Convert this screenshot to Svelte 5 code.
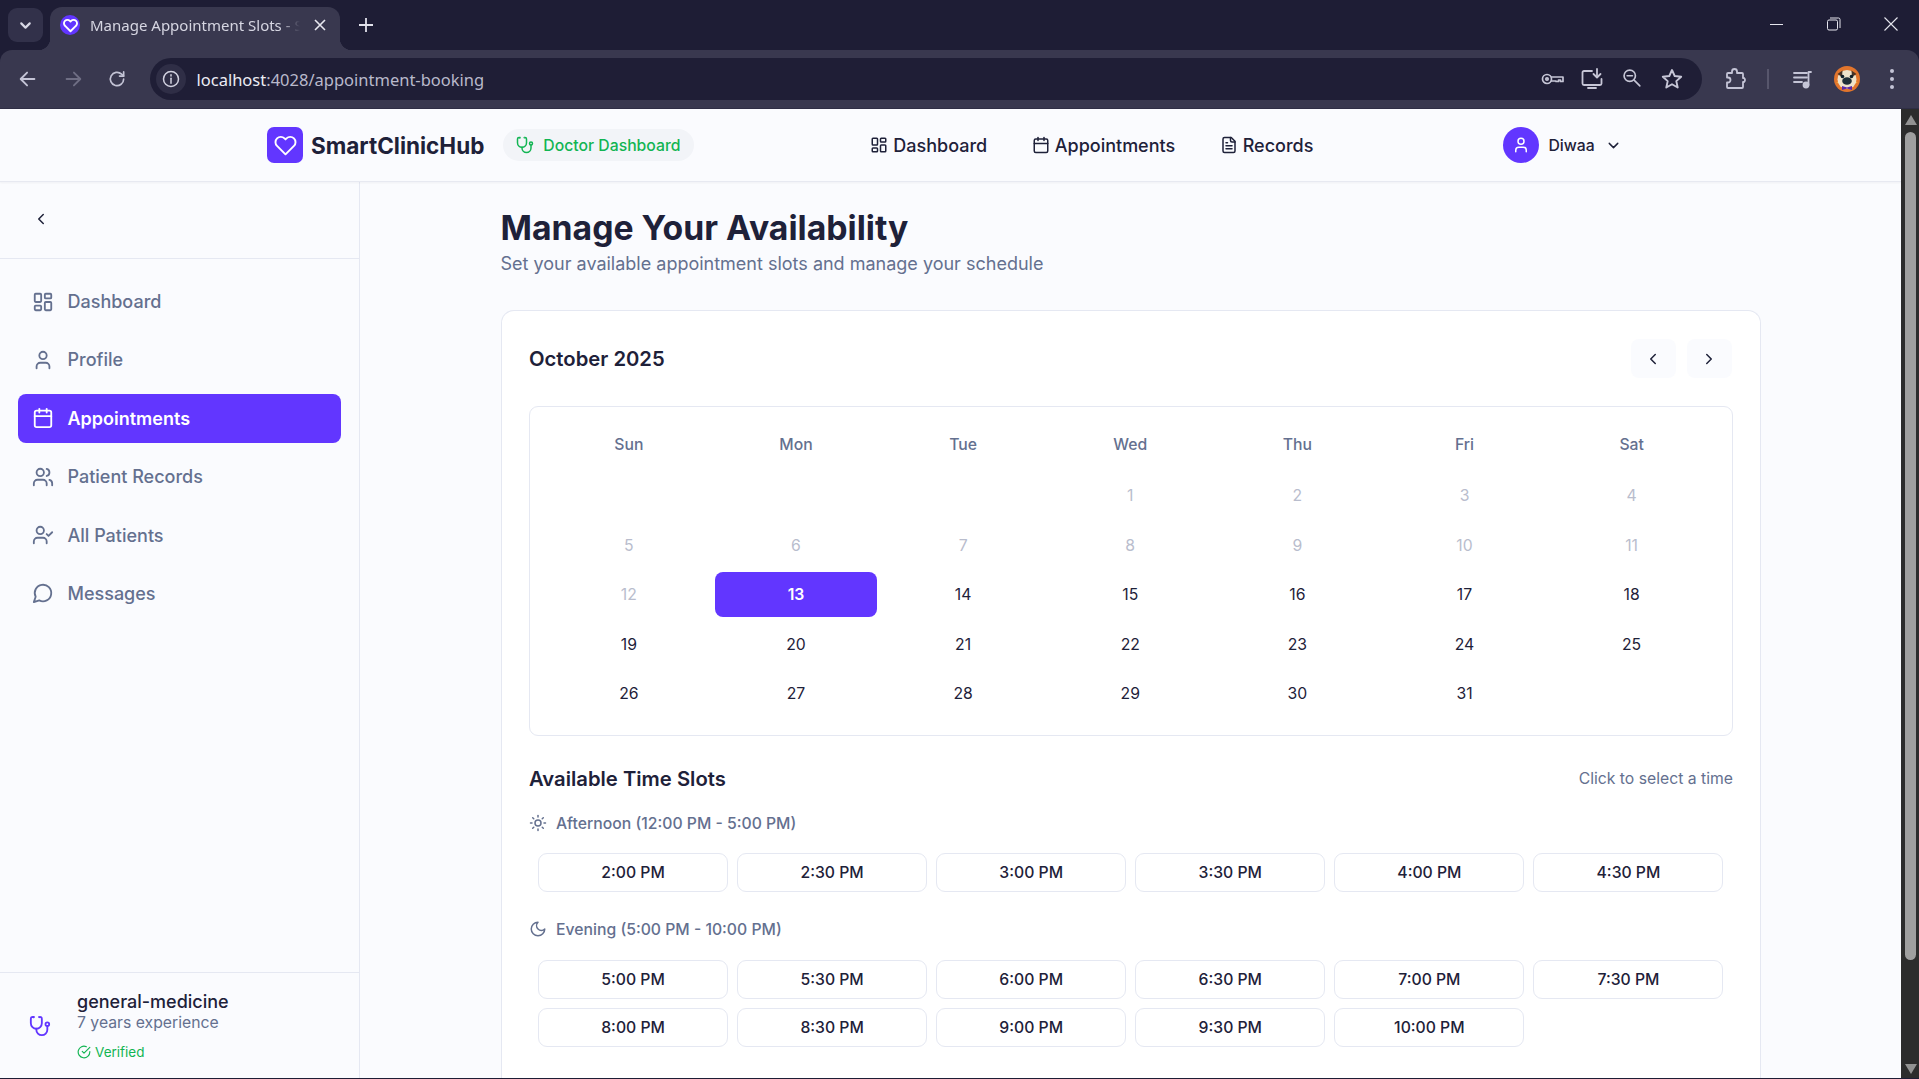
<script>
  const icons = {
    dash: '<rect x="3" y="3" width="7" height="9" rx="1"/><rect x="14" y="3" width="7" height="5" rx="1"/><rect x="14" y="12" width="7" height="9" rx="1"/><rect x="3" y="16" width="7" height="5" rx="1"/>',
    user: '<path d="M19 21v-2a4 4 0 0 0-4-4H9a4 4 0 0 0-4 4v2"/><circle cx="12" cy="7" r="4"/>',
    cal: '<path d="M8 2v4"/><path d="M16 2v4"/><rect x="3" y="4" width="18" height="18" rx="2"/><path d="M3 10h18"/>',
    users: '<path d="M16 21v-2a4 4 0 0 0-4-4H6a4 4 0 0 0-4 4v2"/><circle cx="9" cy="7" r="4"/><path d="M22 21v-2a4 4 0 0 0-3-3.87"/><path d="M16 3.13a4 4 0 0 1 0 7.75"/>',
    ucheck: '<path d="M16 21v-2a4 4 0 0 0-4-4H6a4 4 0 0 0-4 4v2"/><circle cx="9" cy="7" r="4"/><polyline points="16 11 18 13 22 9"/>',
    msg: '<path d="M7.9 20A9 9 0 1 0 4 16.1L2 22Z"/>',
    file: '<path d="M15 2H6a2 2 0 0 0-2 2v16a2 2 0 0 0 2 2h12a2 2 0 0 0 2-2V7Z"/><path d="M14 2v4a2 2 0 0 0 2 2h4"/><path d="M10 9H8"/><path d="M16 13H8"/><path d="M16 17H8"/>',
    steth: '<path d="M4.8 2.3A.3.3 0 1 0 5 2H4a2 2 0 0 0-2 2v5a6 6 0 0 0 6 6a6 6 0 0 0 6-6V4a2 2 0 0 0-2-2h-1a.2.2 0 1 0 .3.3"/><path d="M8 15v1a6 6 0 0 0 6 6a6 6 0 0 0 6-6v-4"/><circle cx="20" cy="10" r="2"/>',
    heart: '<path d="M20.84 4.61a5.5 5.5 0 0 0-7.78 0L12 5.67l-1.06-1.06a5.5 5.5 0 0 0-7.78 7.78l1.06 1.06L12 21.23l7.78-7.78 1.06-1.06a5.5 5.5 0 0 0 0-7.78z"/>',
    sun: '<circle cx="12" cy="12" r="4"/><path d="M12 2v2"/><path d="M12 20v2"/><path d="m4.93 4.93 1.41 1.41"/><path d="m17.66 17.66 1.41 1.41"/><path d="M2 12h2"/><path d="M20 12h2"/><path d="m6.34 17.66-1.41 1.41"/><path d="m19.07 4.93-1.41 1.41"/>',
    moon: '<path d="M12 3a6 6 0 0 0 9 9 9 9 0 1 1-9-9Z"/>',
    check: '<path d="M22 11.08V12a10 10 0 1 1-5.93-9.14"/><path d="m9 11 3 3L22 4"/>',
    left: '<path d="m15 18-6-6 6-6"/>',
    right: '<path d="m9 18 6-6-6-6"/>',
    down: '<path d="m6 9 6 6 6-6"/>',
    back: '<path d="M19 12H5"/><path d="m11 5-7 7 7 7"/>',
    fwd: '<path d="M5 12h14"/><path d="m13 5 7 7-7 7"/>',
    reload: '<path d="M20 12a8 8 0 1 1-2.5-5.8L20 8.5"/><path d="M20 3.5v5h-5"/>',
    info: '<circle cx="12" cy="12" r="9"/><path d="M12 11v6"/><path d="M12 7v1.5"/>',
    key: '<circle cx="7" cy="12" r="4.5"/><circle cx="7" cy="12" r="1.2"/><path d="M11.5 10H23v4.5h-2.5V13h-2v1.5h-2.5V14h-4.5"/>',
    install: '<path d="M12 4H4a1.5 1.5 0 0 0-1.5 1.5v11A1.5 1.5 0 0 0 4 18h16a1.5 1.5 0 0 0 1.5-1.5V12"/><path d="M8 21h8"/><path d="M17 2v8"/><path d="m13.5 7 3.5 3.5L20.500 7"/>',
    search: '<circle cx="10" cy="10" r="6.500"/><path d="M7 10h6"/><path d="m15 15 6.500 6.500"/>',
    star: '<path d="m12 3 2.700 6 6.500.7-4.900 4.400 1.400 6.400L12 17.200 6.300 20.500l1.400-6.400L2.800 9.700l6.500-.7z"/>',
    ext: '<path d="M9 4.500a2.500 2.500 0 0 1 5 0V6h5a1 1 0 0 1 1 1v4h1a2.500 2.500 0 0 1 0 4h-1v5a1 1 0 0 1-1 1H5a1 1 0 0 1-1-1v-4.500h1a2.500 2.500 0 0 0 0-5H4V7a1 1 0 0 1 1-1h4z"/>',
    media: '<path d="M3 6h13"/><path d="M3 10.500h13"/><path d="M3 15h8"/><path d="M20 5h-2.500v13"/><circle cx="15" cy="18" r="2.500" fill="currentColor"/>'
  };

  const sideItems = [
    { icon: 'dash', label: 'Dashboard' },
    { icon: 'user', label: 'Profile' },
    { icon: 'cal', label: 'Appointments', active: true },
    { icon: 'users', label: 'Patient Records' },
    { icon: 'ucheck', label: 'All Patients' },
    { icon: 'msg', label: 'Messages' }
  ];
  const topLinks = [
    { icon: 'dash', label: 'Dashboard' },
    { icon: 'cal', label: 'Appointments' },
    { icon: 'file', label: 'Records' }
  ];
  const weekdays = ['Sun', 'Mon', 'Tue', 'Wed', 'Thu', 'Fri', 'Sat'];
  const days = [null, null, null, ...Array.from({ length: 31 }, (_, i) => i + 1)];
  const afternoon = ['2:00 PM', '2:30 PM', '3:00 PM', '3:30 PM', '4:00 PM', '4:30 PM'];
  const evening = ['5:00 PM', '5:30 PM', '6:00 PM', '6:30 PM', '7:00 PM', '7:30 PM', '8:00 PM', '8:30 PM', '9:00 PM', '9:30 PM', '10:00 PM'];
</script>

{#snippet icon(name, size, sw = 2)}
  <svg class="ic" width={size} height={size} viewBox="0 0 24 24" fill="none" stroke="currentColor" stroke-width={sw} stroke-linecap="round" stroke-linejoin="round">{@html icons[name]}</svg>
{/snippet}

<div class="screen">
  <div class="tabstrip">
    <div class="tablist">{@render icon('down', 17, 3)}</div>
    <div class="tab">
      <span class="favicon">{@render icon('heart', 15, 3)}</span>
      <span class="tabtitle">Manage Appointment Slots - SmartClinicHub</span>
      <span class="tabclose">
        <svg width="12" height="12" viewBox="0 0 12 12" fill="none" stroke="currentColor" stroke-width="1.600"><path d="M1 1l10 10M11 1L1 11"/></svg>
      </span>
    </div>
    <div class="newtab">
      <svg width="14" height="14" viewBox="0 0 14 14" fill="none" stroke="currentColor" stroke-width="1.800"><path d="M7 0v14M0 7h14"/></svg>
    </div>
    <div class="winctl">
      <span class="wc"><svg width="14" height="14" viewBox="0 0 14 14" fill="none" stroke="currentColor"><path d="M0 7.500h13"/></svg></span>
      <span class="wc"><svg width="14" height="14" viewBox="0 0 14 14" fill="none" stroke="currentColor"><rect x="0.500" y="3" width="10" height="10" rx="1.500"/><path d="M3 1h8.500a1.500 1.500 0 0 1 1.500 1.500V11"/></svg></span>
      <span class="wc"><svg width="14" height="14" viewBox="0 0 14 14" fill="none" stroke="currentColor" stroke-width="1.100"><path d="M.5.500l13 13M13.500.500l-13 13"/></svg></span>
    </div>
  </div>

  <div class="toolbar">
    <span class="tb">{@render icon('back', 22)}</span>
    <span class="tb dim">{@render icon('fwd', 22)}</span>
    <span class="tb">{@render icon('reload', 20)}</span>
    <div class="urlbar">
      <span class="infobtn">{@render icon('info', 20, 1.800)}</span>
      <span class="url"><span class="host">localhost</span>:4028/appointment-booking</span>
      <span class="urlicons">
        <span class="ui">{@render icon('key', 24, 1.700)}</span>
        <span class="ui">{@render icon('install', 24, 1.800)}</span>
        <span class="ui">{@render icon('search', 21, 1.900)}</span>
        <span class="ui">{@render icon('star', 24, 1.900)}</span>
      </span>
    </div>
    <span class="tb ext">{@render icon('ext', 24, 1.800)}</span>
    <span class="divider"></span>
    <span class="tb">{@render icon('media', 24, 1.800)}</span>
    <span class="tb">
      <svg width="26" height="26" viewBox="0 0 26 26">
        <circle cx="13" cy="13" r="13" fill="#e2752c"/>
        <path d="M2 17c3-1 4-6 3-9l2 9zM24 17c-3-1-4-6-3-9l-2 9z" fill="#f2b23a"/>
        <ellipse cx="13" cy="13.500" rx="9.500" ry="9.500" fill="#efe3cb"/>
        <path d="M3.500 8 8.500 4.500 8 11zM22.500 8 17.500 4.500 18 11z" fill="#4a3426"/>
        <ellipse cx="13" cy="15" rx="4.800" ry="3.800" fill="#1f2f38"/>
        <circle cx="8.500" cy="10.500" r="1.800" fill="#10202a"/>
        <circle cx="17.500" cy="10.500" r="1.800" fill="#10202a"/>
        <path d="M8 20l5 1.500L18 20v4l-5-1.500L8 24z" fill="#5b2aa8"/>
      </svg>
    </span>
    <span class="tb dots"><i></i><i></i><i></i></span>
  </div>

  <div class="viewport">
    <div class="page">
      <header class="topbar">
        <div class="logo">{@render icon('heart', 23)}</div>
        <span class="brand">SmartClinicHub</span>
        <span class="badge">{@render icon('steth', 18)}Doctor Dashboard</span>
        <nav class="toplinks">
          {#each topLinks as l}
            <span class="toplink">{@render icon(l.icon, 18)}{l.label}</span>
          {/each}
        </nav>
        <div class="account">
          <span class="avatar">{@render icon('user', 18)}</span>
          <span class="acname">Diwaa</span>
          {@render icon('down', 17)}
        </div>
      </header>

      <div class="body">
        <aside class="sidebar">
          <div class="collapse">{@render icon('left', 18)}</div>
          <nav class="sidenav">
            {#each sideItems as it}
              <div class="sideitem" class:active={it.active}>{@render icon(it.icon, 22)}<span>{it.label}</span></div>
            {/each}
          </nav>
          <div class="sidefoot">
            <span class="stetho">{@render icon('steth', 22)}</span>
            <div class="footinfo">
              <div class="spec">general-medicine</div>
              <div class="years">7 years experience</div>
              <div class="verified">{@render icon('check', 14)}Verified</div>
            </div>
          </div>
        </aside>

        <main class="main">
          <h1>Manage Your Availability</h1>
          <p class="sub">Set your available appointment slots and manage your schedule</p>

          <section class="card">
            <div class="calhead">
              <h2>October 2025</h2>
              <div class="calnav">
                <button class="navbtn">{@render icon('left', 18)}</button>
                <button class="navbtn">{@render icon('right', 18)}</button>
              </div>
            </div>

            <div class="calbox">
              <div class="weekdays">
                {#each weekdays as w}<span>{w}</span>{/each}
              </div>
              <div class="days">
                {#each days as d}
                  <span class="day" class:past={d && d < 13} class:sel={d === 13}>{d ?? ''}</span>
                {/each}
              </div>
            </div>

            <div class="slothead">
              <h3>Available Time Slots</h3>
              <span class="hint">Click to select a time</span>
            </div>

            <div class="period first">{@render icon('sun', 18)}<span>Afternoon (12:00 PM - 5:00 PM)</span></div>
            <div class="slots">
              {#each afternoon as s}<button class="slot">{s}</button>{/each}
            </div>

            <div class="period">{@render icon('moon', 18)}<span>Evening (5:00 PM - 10:00 PM)</span></div>
            <div class="slots">
              {#each evening as s}<button class="slot">{s}</button>{/each}
            </div>
          </section>
        </main>
      </div>
    </div>

    <div class="scrollbar">
      <span class="arrow up"></span>
      <span class="thumb"></span>
      <span class="arrow dn"></span>
    </div>
  </div>
  <div class="bottomline"></div>
</div>

<style>
  :global(body) { margin: 0; overflow: hidden; background: #1e1d35; }
  .screen {
    width: 1919px; height: 1079px; display: flex; flex-direction: column; overflow: hidden;
    font-family: Inter, "Noto Sans", sans-serif; color: #1e2139;
  }
  .ic { display: block; flex: none; }

  /* browser chrome */
  .tabstrip { height: 50px; flex: none; background: #1e1d35; display: flex; align-items: flex-end; position: relative; }
  .tablist {
    width: 35px; height: 34px; margin: 0 7px 8px 8px; border-radius: 9px; background: #32314a;
    display: flex; align-items: center; justify-content: center; color: #d9d9e6;
  }
  .tab {
    width: 290px; height: 43px; background: #39384f; border-radius: 12px 12px 0 0; position: relative;
    display: flex; align-items: center; padding: 0 0 7px 10px; box-sizing: border-box; color: #d6d6e2;
    font: 15px "Noto Sans", sans-serif;
  }
  .tab::before, .tab::after { content: ""; position: absolute; bottom: 0; width: 12px; height: 12px; }
  .tab::before { left: -12px; background: radial-gradient(circle at 0 0, transparent 12px, #39384f 12.5px); }
  .tab::after { right: -12px; background: radial-gradient(circle at 100% 0, transparent 12px, #39384f 12.5px); }
  .favicon { width: 20px; height: 20px; border-radius: 50%; background: #6236ff; color: #fff; display: flex; align-items: center; justify-content: center; }
  .tabtitle {
    margin-left: 10px; width: 210px; white-space: nowrap; overflow: hidden;
    -webkit-mask-image: linear-gradient(90deg, #000 190px, transparent 210px);
    mask-image: linear-gradient(90deg, #000 190px, transparent 210px);
  }
  .tabclose { margin-left: 14px; color: #e8e8f0; display: flex; }
  .newtab { margin: 0 0 18px 19px; color: #e2e2ec; display: flex; }
  .winctl { margin-left: auto; margin-right: 21px; display: flex; align-self: flex-start; margin-top: 17px; gap: 43px; color: #e6e6ee; }
  .wc { display: flex; width: 14px; }

  .toolbar {
    height: 59px; flex: none; box-sizing: border-box; background: #39384f; border-radius: 12px 12px 0 0;
    border-bottom: 1px solid #2f2e45; display: flex; align-items: center; padding-left: 6px; color: #c4c4d6;
  }
  .tb { width: 44.500px; height: 40px; display: flex; align-items: center; justify-content: center; flex: none; }
  .tb.dim { color: #6f6e84; }
  .urlbar {
    width: 1552px; height: 42px; margin-left: 10px; flex: none; border-radius: 21px; background: #1f1e36;
    display: flex; align-items: center; padding: 0 10px 0 6px; box-sizing: border-box;
  }
  .infobtn { width: 30px; height: 30px; border-radius: 50%; background: #2f2e46; display: flex; align-items: center; justify-content: center; color: #d2d2e0; }
  .url { margin-left: 11px; font: 16.500px "Noto Sans", sans-serif; color: #b9b9cb; }
  .host { color: #ecECF4; }
  .urlicons { margin-left: auto; display: flex; }
  .ui { width: 40px; display: flex; justify-content: center; color: #c6c6d6; }
  .ext { margin-left: 12px; width: 42px; }
  .divider { width: 2px; height: 20px; background: #57566c; margin: 0 12px 0 11px; flex: none; }
  .dots { flex-direction: column; gap: 4px; margin-left: 0; }
  .dots i { width: 4px; height: 4px; border-radius: 50%; background: #c4c4d6; display: block; }

  /* viewport */
  .viewport { flex: 1; min-height: 0; display: flex; }
  .page { flex: 1; min-width: 0; background: #fafbfe; display: flex; flex-direction: column; }

  .topbar {
    height: 73px; flex: none; box-sizing: border-box; border-bottom: 1px solid #e7e9f1; box-shadow: 0 1px 2px rgba(30, 33, 57, .05);
    display: flex; align-items: center; padding-left: 267px; position: relative; z-index: 1;
  }
  .logo { width: 36px; height: 36px; border-radius: 7px; background: #6236ff; color: #fff; display: flex; align-items: center; justify-content: center; }
  .brand { margin-left: 8px; font-size: 22.500px; font-weight: 700; }
  .badge {
    margin-left: 19px; height: 32px; width: 191px; box-sizing: border-box; border-radius: 16px; background: #f2f4f8;
    display: flex; align-items: center; gap: 9px; padding-left: 13px; color: #12b553; font-size: 15.750px; font-weight: 500;
  }
  .toplinks { display: flex; margin-left: 176px; gap: 44.500px; }
  .toplink { display: flex; align-items: center; gap: 5px; font-size: 18px; font-weight: 500; }
  .account { margin-left: 190px; display: flex; align-items: center; }
  .avatar { width: 36px; height: 36px; border-radius: 50%; background: #6236ff; color: #fff; display: flex; align-items: center; justify-content: center; }
  .acname { margin: 0 10px 0 9px; font-size: 15.750px; font-weight: 500; }

  .body { flex: 1; min-height: 0; display: flex; }
  .sidebar { width: 360px; flex: none; box-sizing: border-box; border-right: 1px solid #e5e8f2; display: flex; flex-direction: column; }
  .collapse { height: 77px; box-sizing: border-box; border-bottom: 1px solid #e5e8f2; display: flex; align-items: center; padding: 0 0 2px 32px; }
  .sidenav { padding: 18px 18px 0; display: flex; flex-direction: column; gap: 9.400px; }
  .sideitem {
    height: 49px; border-radius: 8px; display: flex; align-items: center; gap: 14px; padding-left: 13.500px;
    color: #64708f; font-size: 18px; font-weight: 500;
  }
  .sideitem.active { background: #6236ff; color: #fff; font-weight: 600; }
  .sidefoot { margin-top: auto; border-top: 1px solid #e5e8f2; height: 106px; box-sizing: border-box; display: flex; align-items: center; padding-left: 29px; gap: 26px; }
  .stetho { color: #6236ff; margin-top: 0; }
  .footinfo { padding-top: 3px; }
  .spec { font-size: 18px; font-weight: 500; line-height: 20px; }
  .years { font-size: 15.750px; color: #64708f; line-height: 20px; margin-top: 1px; }
  .verified { display: flex; align-items: center; gap: 4px; margin-top: 9px; font-size: 13.500px; line-height: 20px; color: #12b553; }

  .main { flex: 1; min-width: 0; overflow: hidden; padding: 26px 140px 0 141px; box-sizing: border-box; }
  h1 { margin: 0 0 0 -.5px; font-size: 33.750px; line-height: 40px; font-weight: 700; }
  .sub { margin: 3px 0 0 -.5px; font-size: 18px; line-height: 26px; color: #64708f; }
  .card { margin-top: 33px; background: #fff; border: 1px solid #e5e8f2; border-bottom: none; border-radius: 13px 13px 0 0; padding: 28px 27px 40px; }
  .calhead { display: flex; align-items: center; justify-content: space-between; height: 39px; }
  h2 { margin: 0; font-size: 20.250px; font-weight: 600; }
  .calnav { display: flex; gap: 11px; margin-right: 1.500px; }
  .navbtn { width: 45px; height: 39px; border: none; border-radius: 8px; background: #fafbfe; color: #1e2139; display: flex; align-items: center; justify-content: center; padding: 0; }
  .calbox { margin-top: 28px; border: 1px solid #e5e8f2; border-radius: 9px; padding: 18px 19px 18px 17.500px; height: 330px; box-sizing: border-box; }
  .weekdays { display: grid; grid-template-columns: repeat(7, 1fr); column-gap: 4.400px; height: 38px; align-items: center; text-align: center; font-size: 15.750px; font-weight: 500; color: #64708f; margin-bottom: 10px; }
  .days { display: grid; grid-template-columns: repeat(7, 1fr); column-gap: 4.400px; row-gap: 4.500px; }
  .day { height: 45px; display: flex; align-items: center; justify-content: center; font-size: 15.750px; font-weight: 400; border-radius: 8px; }
  .day.past { color: #b9bdcd; }
  .day.sel { background: #6236ff; color: #fff; font-weight: 600; }
  .slothead { margin-top: 28.500px; display: flex; align-items: center; justify-content: space-between; height: 28px; }
  h3 { margin: 0; font-size: 20.250px; font-weight: 600; }
  .hint { font-size: 15.750px; color: #64708f; }
  .period { margin-top: 26px; height: 22px; display: flex; align-items: center; gap: 9px; font-size: 15.750px; font-weight: 500; color: #64708f; }
  .period.first { margin-top: 19.500px; }
  .slots { margin-top: 20px; padding: 0 9.500px 0 9px; display: grid; grid-template-columns: repeat(6, 1fr); gap: 9px; }
  .period.first + .slots { margin-top: 19px; }
  .slot { height: 39px; box-sizing: border-box; background: #fff; border: 1px solid #e5e8f2; border-radius: 9px; font: 500 15.750px Inter, sans-serif; color: #1e2139; padding: 0; }

  .scrollbar { width: 18px; flex: none; background: #2c2c2c; display: flex; flex-direction: column; align-items: center; }
  .arrow { width: 0; height: 0; border-left: 6px solid transparent; border-right: 6px solid transparent; flex: none; margin-left: 1px; }
  .arrow.up { border-bottom: 10px solid #929292; margin-top: 6px; }
  .arrow.dn { border-top: 10px solid #929292; margin-top: auto; margin-bottom: 4px; }
  .thumb { width: 11px; height: 828px; margin: 7px 0 0 1px; border-radius: 6px; background: #9f9f9f; flex: none; }
  .bottomline { height: 1px; flex: none; background: #1e1d35; }
</style>
